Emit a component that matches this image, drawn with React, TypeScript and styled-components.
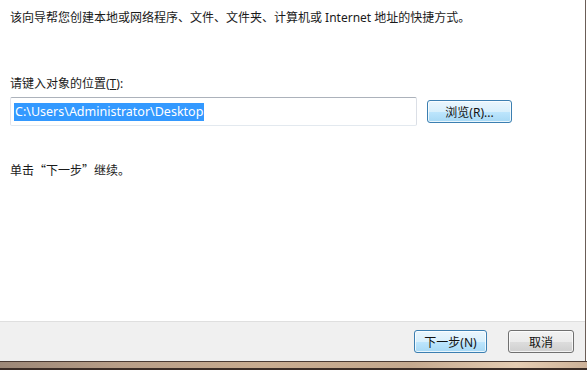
import styled, { createGlobalStyle } from "styled-components";

const GlobalStyle = createGlobalStyle`
  html, body {
    margin: 0;
    padding: 0;
    background: #ffffff;
  }
  body {
    font-family: "Noto Sans", "Noto Sans CJK SC", sans-serif;
    font-size: 12px;
    color: #1a1a1a;
  }
`;

const Window = styled.div`
  width: 587px;
  height: 370px;
  display: flex;
  flex-direction: column;
  overflow: hidden;
  background: #ffffff;
`;

const Main = styled.div`
  flex: 1 1 auto;
  min-height: 0;
  display: flex;
  flex-direction: column;
  width: 585px;
  border-right: 1px solid #6b5d57;
`;

const Content = styled.div`
  flex: 1;
  padding: 10px 0 0 10px;
  display: flex;
  flex-direction: column;
`;

const Text = styled.p<{ $top?: number }>`
  margin: ${(props) => props.$top ?? 0}px 0 0 0;
  line-height: 16px;
  font-size: 12px;
  white-space: nowrap;
`;

const Cjk = styled.span`
  font-family: "Noto Sans CJK SC", sans-serif;
`;

const Row = styled.div`
  display: flex;
  align-items: center;
  gap: 10px;
  margin-top: 5px;
`;

const Input = styled.div`
  width: 402px;
  height: 27px;
  border: 1px solid #abadb3;
  border-top-color: #acb2bb;
  border-left-color: #e2e3ea;
  border-bottom-color: #e3e9ef;
  border-right-color: #dbdfe6;
  border-radius: 2px;
  display: flex;
  align-items: center;
  padding-left: 3px;
  box-sizing: content-box;
`;

const Selected = styled.span`
  background: #3399ff;
  color: #ffffff;
  font-size: 12.5px;
  line-height: 18px;
  padding: 0 1px;
`;

const Button = styled.button<{ $w: number; $focus?: boolean }>`
  width: ${(props) => props.$w}px;
  height: 23px;
  padding: 0;
  font-family: "Noto Sans", "Noto Sans CJK SC", sans-serif;
  font-size: 12px;
  color: #111;
  border-radius: 3px;
  border: 1px solid ${(props) => (props.$focus ? "#3c7fb1" : "#707070")};
  background: ${(props) =>
    props.$focus
      ? "linear-gradient(#eaf6fd 0%, #d9f0fc 50%, #bee6fd 51%, #a7d9f5 100%)"
      : "linear-gradient(#f2f2f2 0%, #ebebeb 50%, #dddddd 51%, #cfcfcf 100%)"};
  box-shadow: inset 0 0 0 1px rgba(255, 255, 255, 0.75);
`;

const Footer = styled.div`
  height: 39px;
  flex-shrink: 0;
  background: #f0f0f0;
  border-top: 1px solid #dfdfdf;
  display: flex;
  align-items: center;
  justify-content: flex-end;
  gap: 21px;
  padding-right: 11px;
`;

const Frame = styled.div`
  height: 9px;
  flex-shrink: 0;
  border-top: 1px solid #4a3a33;
  border-bottom: 2px solid #3b2c26;
  background: linear-gradient(
    90deg,
    #9c8777 0%,
    #b89e88 20%,
    #c9ac90 45%,
    #c5a98f 70%,
    #e6cdb3 88%,
    #cdb299 100%
  );
  box-sizing: border-box;
`;

export default function App() {
  return (
    <Window>
      <GlobalStyle />
      <Main>
        <Content>
          <Text>
            该向导帮您创建本地或网络程序、文件、文件夹、计算机或 Internet 地址的快捷方式。
          </Text>
          <Text $top={50}>
            请键入对象的位置(<u>T</u>):
          </Text>
          <Row>
            <Input>
              <Selected>C:\Users\Administrator\Desktop</Selected>
            </Input>
            <Button $w={85} $focus>
              浏览(R)...
            </Button>
          </Row>
          <Text $top={36}>
            <Cjk>单击“下一步”继续。</Cjk>
          </Text>
        </Content>
        <Footer>
          <Button $w={73} $focus>
            下一步(N)
          </Button>
          <Button $w={66}>取消</Button>
        </Footer>
      </Main>
      <Frame />
    </Window>
  );
}
